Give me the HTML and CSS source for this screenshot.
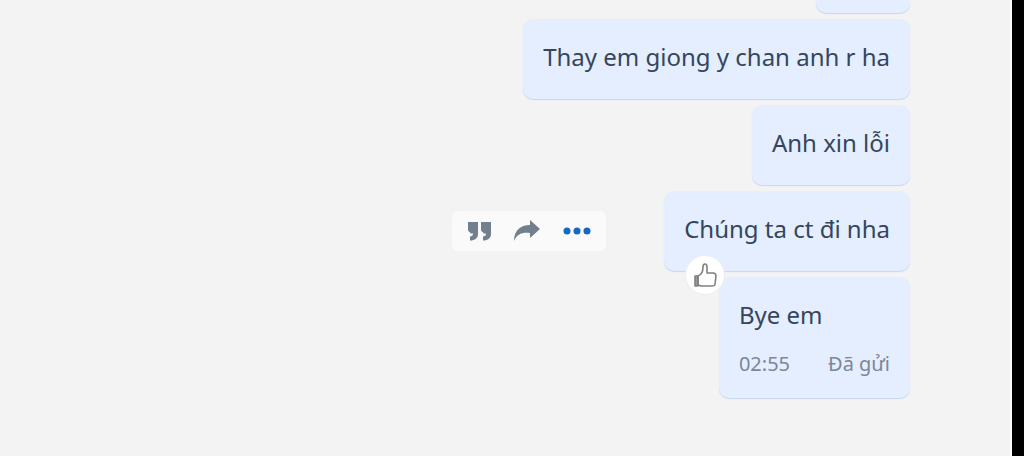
FILE: index.html
```
<!DOCTYPE html>
<html lang="vi">

  <head>
    <meta charset="utf-8">
    <title>Tin nhắn</title>
    <link rel="stylesheet" href="styles.css">
  </head>

  <body>
    <main class="chat">

      <div class="message">
        <div class="bubble bubble-empty"></div>
      </div>

      <div class="message">
        <div class="bubble">
          <p class="text">Thay em giong y chan anh r ha</p>
        </div>
      </div>

      <div class="message">
        <div class="bubble">
          <p class="text">Anh xin lỗi</p>
        </div>
      </div>

      <div class="message">
        <div class="actions">
          <button class="action" type="button" aria-label="Trả lời">
            <svg width="24" height="20" viewBox="0 0 24 20" fill="#727f8c">
              <path d="M1 1h10v12c0 4-3 6.500-8 6.500v-4c2 0 3-1 3-3H4l-3-3z"/>
              <path d="M14 1h10v12c0 4-3 6.500-8 6.500v-4c2 0 3-1 3-3h-2l-3-3z"/>
            </svg>
          </button>
          <button class="action" type="button" aria-label="Chuyển tiếp">
            <svg width="28" height="22" viewBox="0 0 28 22" fill="#727f8c">
              <path d="M17 0l10 9-10 9v-5C9 12 4 14 1 21 1 11 7 5 17 5z"/>
            </svg>
          </button>
          <button class="action" type="button" aria-label="Thêm">
            <svg width="28" height="8" viewBox="0 0 28 8" fill="#1469c7">
              <circle cx="4" cy="4" r="3.500"/>
              <circle cx="14" cy="4" r="3.500"/>
              <circle cx="24" cy="4" r="3.500"/>
            </svg>
          </button>
        </div>
        <div class="bubble">
          <p class="text">Chúng ta ct đi nha</p>
          <button class="reaction" type="button" aria-label="Thích">
            <svg width="24" height="26" viewBox="0 0 24 26" fill="none" stroke="#808080" stroke-width="1.600" stroke-linejoin="round">
              <path d="M5 14c3-1 5-4 5-9 0-4 4-4 4 0v6h6c2 0 3 1 3 3l-1 8c0 2-1 2-3 2H8l-3-1z"/>
              <path d="M2 14h3v10H2z" fill="#999"/>
            </svg>
          </button>
        </div>
      </div>

      <div class="message">
        <div class="bubble">
          <p class="text">Bye em</p>
          <div class="meta">
            <span>02:55</span>
            <span>Đã gửi</span>
          </div>
        </div>
      </div>

    </main>
  </body>

</html>
```
FILE: styles.css
```
* {
  box-sizing: border-box;
}

body {
  margin: 0;
  padding-right: 12px;
  background-color: #000;
  font-family: "Noto Sans", "Open Sans", sans-serif;
  color: #34465d;
}

/* newest message stays at the bottom, older ones slide out at the top */
.chat {
  display: flex;
  flex-direction: column;
  justify-content: flex-end;
  gap: 6px;
  height: 100vh;
  overflow: hidden;
  padding: 0 100px 58px 20px;
  background-color: #f3f3f3;
  border-right: 2px solid #fff;
}

.message {
  display: flex;
  flex-shrink: 0;
  justify-content: flex-end;
  align-items: center;
  gap: 58px;
}

.bubble {
  position: relative;
  min-height: 80px;
  padding: 20px;
  background-color: #e4eefe;
  border-radius: 10px;
  box-shadow: 0 1px 1px #c6d6ed;
}

.bubble-empty {
  width: 94px;
}

.text {
  margin: 0;
  font-size: 24px;
  line-height: 36px;
}

.meta {
  display: flex;
  justify-content: space-between;
  gap: 38px;
  margin-top: 17px;
  font-size: 20px;
  line-height: 28px;
  color: #7b8898;
}

.actions {
  display: flex;
  align-items: center;
  gap: 22px;
  height: 40px;
  padding: 0 15px;
  background-color: #fafafa;
  border-radius: 6px;
}

.action {
  display: flex;
  padding: 0;
  background: none;
  border: none;
}

.reaction {
  position: absolute;
  left: 21px;
  bottom: -24px;
  z-index: 1;
  display: flex;
  align-items: center;
  justify-content: center;
  width: 40px;
  height: 40px;
  padding: 0;
  background-color: #fff;
  border: 1px solid #eee;
  border-radius: 50%;
}
```
